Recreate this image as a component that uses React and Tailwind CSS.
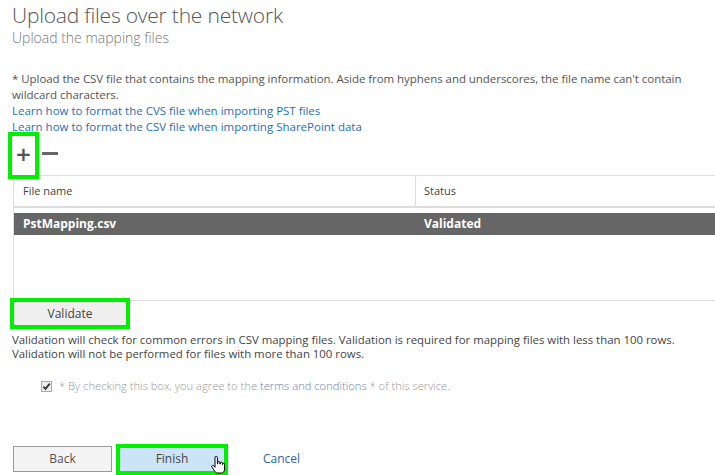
import React from "react";

const HandCursor = () => (
  <svg width="14" height="20" viewBox="0 0 14 20" className="absolute left-[91px] top-[8px]">
    <path
      d="M4 1.5c0-.8.5-1.3 1.2-1.3S6.4.7 6.4 1.5V8h.3V6.6c0-.7.5-1.1 1.1-1.1s1.1.4 1.1 1.1V8h.3V7.2c0-.7.5-1.1 1.1-1.1s1.1.4 1.1 1.1V8.6h.2v-.4c0-.7.4-1 1-1s1 .3 1 1V13c0 2.2-1.2 4-3.2 4H6.4C5 17 4.3 16 3.6 15L1 11.2c-.4-.6-.3-1.3.2-1.6.5-.4 1.2-.2 1.6.3L4 11.3V1.5z"
      fill="#fff"
      stroke="#000"
      strokeWidth="1"
    />
  </svg>
);

const App = () => {
  return (
    <div
      className="w-[715px] h-[475px] overflow-hidden bg-white text-[#444]"
      style={{ fontFamily: '"Open Sans", "Liberation Sans", sans-serif' }}
    >
      <div className="pl-[12px] pt-[1px]">
        <h1 className="text-[21px] leading-[28px] font-light text-[#555] tracking-[-0.2px]">
          Upload files over the network
        </h1>
        <p className="text-[14px] leading-[18px] text-[#777] font-light">
          Upload the mapping files
        </p>

        <div className="mt-[24px] text-[11.5px] leading-[16px] text-[#555]">
          <p className="tracking-[-0.05px]">
            * Upload the CSV file that contains the mapping information. Aside from hyphens and underscores, the file name can't contain wildcard characters.
          </p>
          <a className="block text-[#1f6fb8]">Learn how to format the CVS file when importing PST files</a>
          <a className="block text-[#1f6fb8]">Learn how to format the CSV file when importing SharePoint data</a>
        </div>
      </div>

      <div className="flex items-center -mt-[3px] ml-[8px] h-[47px]">
        <div className="w-[31px] h-[47px] border-[4px] border-[#00f000] flex items-center justify-center">
          <span className="text-[26px] leading-none font-semibold text-[#555] -mt-[4px]">+</span>
        </div>
        <span className="ml-[3px] -mt-[4px] w-[16px] h-[3px] bg-[#666]"></span>
      </div>

      <div className="ml-[13px] -mt-[4px] border-l border-t border-[#ddd] h-[126px] border-b">
        <div className="flex h-[32px] border-b-2 border-[#ddd] text-[11px] text-[#444]">
          <div className="w-[402px] border-r border-[#ddd] pl-[9px] flex items-center">File name</div>
          <div className="flex-1 pl-[8px] flex items-center">Status</div>
        </div>
        <div className="mt-[5px] flex h-[22px] bg-[#666] text-white text-[12px] font-bold items-center">
          <div className="w-[403px] pl-[9px]">PstMapping.csv</div>
          <div className="flex-1 pl-[7px]">Validated</div>
        </div>
      </div>

      <div className="ml-[10px] mt-[-3px] w-[120px] h-[31px] border-[4px] border-[#00f000] bg-[#efefef] flex items-center justify-center text-[12px] text-[#444]">
        Validate
      </div>

      <div className="pl-[12px] mt-[4px] text-[11.4px] leading-[14px] text-[#444]">
        <p>
          Validation will check for common errors in CSV mapping files. Validation is required for mapping files with less than 100 rows.
        </p>
        <p>Validation will not be performed for files with more than 100 rows.</p>
      </div>

      <div className="flex items-center pl-[41px] mt-[17px] text-[11.2px] text-[#999] font-light">
        <span className="w-[11px] h-[11px] border border-[#aaa] bg-[#eee] flex items-center justify-center">
          <svg width="9" height="9" viewBox="0 0 10 10">
            <path d="M1.5 5.2l2.4 2.4L8.6 1.8" fill="none" stroke="#333" strokeWidth="2" />
          </svg>
        </span>
        <span className="ml-[7px]">
          * By checking this box, you agree to the <span className="text-[#6b7fa8]">terms and conditions</span> * of this service.
        </span>
      </div>

      <div className="flex items-center mt-[49px] ml-[13px]">
        <div className="w-[99px] h-[26px] border border-[#999] bg-[#f4f4f4] flex items-center justify-center text-[12px] text-[#555]">
          Back
        </div>
        <div className="relative ml-[4px] w-[112px] h-[31px] border-[4px] border-[#00f000] bg-[#cce4f7] flex items-center justify-center text-[12px] text-[#444]">
          Finish
          <HandCursor />
        </div>
        <a className="ml-[35px] text-[12px] text-[#2a64a8]">Cancel</a>
      </div>
    </div>
  );
};

export default App;
